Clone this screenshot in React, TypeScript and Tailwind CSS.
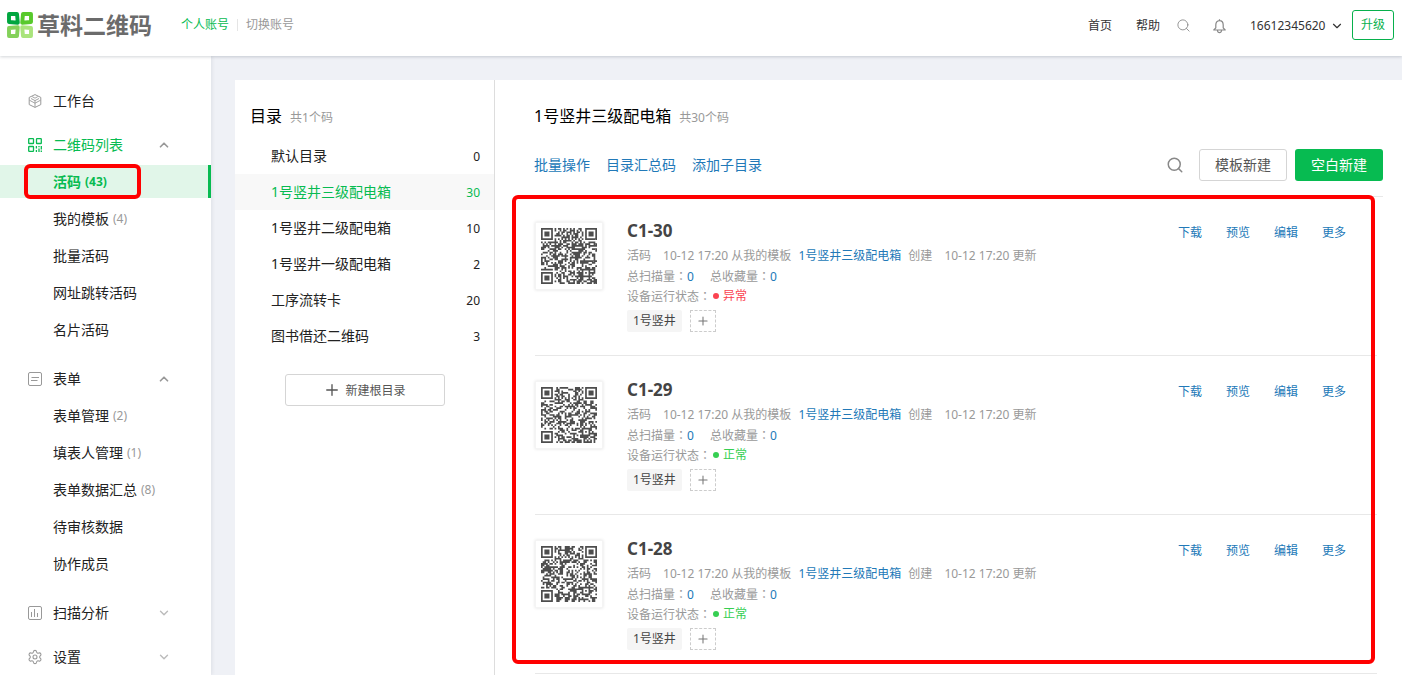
import { Fragment, useState } from "react";
import type { ReactNode } from "react";
import { ChevronDown, ChevronUp, Plus, Search, Settings } from "lucide-react";
import clsx from "clsx";

interface SubItem {
  label: string;
  count?: number;
}

interface NavGroup {
  key: string;
  label: string;
  icon: ReactNode;
  open?: boolean;
  items?: SubItem[];
}

interface CodeItem {
  name: string;
  seed: number;
  ok: boolean;
}

function Logo() {
  return (
    <svg width="26" height="26" viewBox="0 0 26 26" fill="none" strokeWidth="3.9" strokeLinejoin="round">
      <path d="M2 2h8l.8 8.800-8.800-.8z" stroke="#00a63f" />
      <path d="M24 2h-8l-.8 8.800 8.800-.8z" stroke="#58c92c" />
      <path d="M2 24h8l.8-8.800-8.800.8z" stroke="#84d15a" />
      <path d="M24 24h-8l-.8-8.800 8.800.8z" stroke="#aae47c" />
    </svg>
  );
}

function CubeIcon() {
  return (
    <svg width="14" height="14" viewBox="0 0 14 14" fill="none" stroke="currentColor" strokeLinejoin="round">
      <path d="M7 .6 12.8 3.4v7.2L7 13.4 1.2 10.6V3.4z" />
      <path d="M3 4.500 7 6.600l4-2.100M4.200 2.600 7 4.200l2.800-1.600M7 6.600v6.600M1.400 6.200 7 9.200l5.600-3" strokeWidth=".9" />
    </svg>
  );
}

function CodeIcon() {
  return (
    <svg width="14" height="14" viewBox="0 0 14 14" fill="none" stroke="currentColor" strokeWidth="1.3">
      <rect x=".7" y=".7" width="4.8" height="4.8" rx=".6" />
      <rect x="8.5" y=".7" width="4.8" height="4.8" rx=".6" />
      <rect x=".7" y="8.5" width="4.8" height="4.8" rx=".6" />
      <path d="M8.4 8v2.4M8.4 12v2M11 8v1.2M11 10.6V14M13.3 8v3.4M13.3 12.6V14" />
    </svg>
  );
}

function FormIcon() {
  return (
    <svg width="14" height="14" viewBox="0 0 14 14" fill="none" stroke="currentColor">
      <rect x=".5" y=".5" width="13" height="13" rx="1.5" />
      <path d="M3.5 5.5H11M3 8.5h6.5" />
    </svg>
  );
}

function ChartIcon() {
  return (
    <svg width="14" height="14" viewBox="0 0 14 14" fill="none" stroke="currentColor">
      <rect x=".5" y=".5" width="13" height="13" rx="1.5" />
      <path d="M3.500 6v5M6.500 3v8M9.500 7v4" />
    </svg>
  );
}

function BellIcon() {
  return (
    <svg width="13" height="15" viewBox="0 0 13 15" fill="none" stroke="#888" strokeWidth="1.2" strokeLinejoin="round">
      <path d="M6.5 1.6C4 1.6 2.8 3.6 2.8 6v2.8L.8 11h11.4l-2-2.2V6c0-2.4-1.200-4.400-3.700-4.400zM6.500.3v1.300M4.400 11.200c.2 1.700 1 2.500 2.100 2.500s1.900-.8 2.100-2.500" />
    </svg>
  );
}

const SIZE = 33;

// finder, alignment and timing cells are fixed, the rest comes from the seed
function buildCode(seed: number) {
  let state = seed;
  let d = "";
  const corners = [[3, 3], [SIZE - 4, 3], [3, SIZE - 4]];
  for (let y = 0; y < SIZE; y++) {
    for (let x = 0; x < SIZE; x++) {
      state = (state * 1103515245 + 12345) % 2147483648;
      let on = state / 2147483648 < 0.53;
      if (x === 6) on = y % 2 === 0;
      if (y === 6) on = x % 2 === 0;
      const align = Math.max(Math.abs(x - 26), Math.abs(y - 26));
      if (align <= 2) on = align !== 1;
      for (const [cx, cy] of corners) {
        const dist = Math.max(Math.abs(x - cx), Math.abs(y - cy));
        if (dist <= 4) on = dist !== 4 && dist !== 2;
      }
      if (on) d += `M${x} ${y}h1v1h-1z`;
    }
  }
  return d;
}

function QrCode({ seed }: { seed: number }) {
  return (
    <svg className="h-14 w-14" viewBox="0 0 33 33" fill="#4d4d4d">
      <path d={buildCode(seed)} />
    </svg>
  );
}

function Colon() {
  return <span className="font-['Noto_Sans_CJK_TC',sans-serif]">：</span>;
}

const navGroups: NavGroup[] = [
  { key: "desk", label: "工作台", icon: <CubeIcon /> },
  {
    key: "codes",
    label: "二维码列表",
    icon: <CodeIcon />,
    open: true,
    items: [
      { label: "活码", count: 43 },
      { label: "我的模板", count: 4 },
      { label: "批量活码" },
      { label: "网址跳转活码" },
      { label: "名片活码" },
    ],
  },
  {
    key: "forms",
    label: "表单",
    icon: <FormIcon />,
    open: true,
    items: [
      { label: "表单管理", count: 2 },
      { label: "填表人管理", count: 1 },
      { label: "表单数据汇总", count: 8 },
      { label: "待审核数据" },
      { label: "协作成员" },
    ],
  },
  { key: "scan", label: "扫描分析", icon: <ChartIcon />, open: false },
  { key: "settings", label: "设置", icon: <Settings size={16} strokeWidth={1.6} className="-mx-px" />, open: false },
];

const folders = [
  { label: "默认目录", count: 0 },
  { label: "1号竖井三级配电箱", count: 30 },
  { label: "1号竖井二级配电箱", count: 10 },
  { label: "1号竖井一级配电箱", count: 2 },
  { label: "工序流转卡", count: 20 },
  { label: "图书借还二维码", count: 3 },
];

const codes: CodeItem[] = [
  { name: "C1-30", seed: 3011, ok: false },
  { name: "C1-29", seed: 2917, ok: true },
  { name: "C1-28", seed: 2823, ok: true },
];

function Header() {
  return (
    <header className="relative z-10 flex h-14 shrink-0 items-center bg-white pr-2 pb-1.5 pl-[7px] text-xs shadow-[0_1px_3px_rgba(0,21,41,0.18)]">
      <a href="#" className="flex items-center gap-1">
        <Logo />
        <span className="text-[23px] leading-6 font-bold text-[#6b6b6b]">草料二维码</span>
      </a>
      <div className="ml-[29px] flex items-center">
        <a href="#" className="text-[#07bb51]">个人账号</a>
        <span className="mx-2 h-3 w-px bg-[#e5e5e5]" />
        <a href="#" className="text-[#999]">切换账号</a>
      </div>
      <nav className="ml-auto flex items-center text-[#333]">
        <a href="#" className="mr-6 pt-0.5">首页</a>
        <a href="#" className="mr-4 pt-0.5">帮助</a>
        <button aria-label="搜索" className="mr-[22px]">
          <Search size={15} strokeWidth={1.4} className="text-[#888]" />
        </button>
        <button aria-label="通知" className="mr-6 pt-0.5">
          <BellIcon />
        </button>
        <button className="mr-2 flex items-center gap-0.5 pt-0.5">
          <span className="min-w-[78px] text-left">16612345620</span>
          <ChevronDown size={14} strokeWidth={2} />
        </button>
        <button className="h-[30px] rounded-[3px] border border-[#07b04c] px-2 text-[#07b04c]">升级</button>
      </nav>
    </header>
  );
}

function Sidebar({ active, onSelect }: { active: string; onSelect: (label: string) => void }) {
  return (
    <aside className="z-[5] flex w-[211px] shrink-0 flex-col overflow-hidden bg-white pt-[25px] text-sm text-[#222] shadow-[1px_0_4px_rgba(0,21,41,0.08)]">
      {navGroups.map((group) => {
        const current = group.items?.some((item) => item.label === active);
        return (
          <Fragment key={group.key}>
            <button
              className={clsx(
                "flex h-10 shrink-0 items-center gap-[11px] pr-10 pl-7 text-left",
                !group.items && "mb-1",
                current && "text-[#07bb51]"
              )}
            >
              <span className={current ? "text-[#07bb51]" : "text-[#999]"}>{group.icon}</span>
              <span className="flex-1">{group.label}</span>
              {group.open === true && <ChevronUp size={14} strokeWidth={3} className="text-[#999]" />}
              {group.open === false && <ChevronDown size={14} strokeWidth={2.4} className="text-[#bbb]" />}
            </button>
            {group.items && (
              <ul className="mb-[13px] flex flex-col gap-1">
                {group.items.map((item) => {
                  const selected = item.label === active;
                  return (
                    <li key={item.label} className="relative">
                      <button
                        onClick={() => onSelect(item.label)}
                        className={clsx(
                          "flex h-[33px] w-full items-center gap-1 pl-[53px]",
                          selected && "border-r-3 border-[#07bb51] bg-[#e1f6e9] font-bold text-[#07bb51]"
                        )}
                      >
                        {item.label}
                        {item.count !== undefined && (
                          <span className={clsx("text-xs", !selected && "text-[#999]")}>({item.count})</span>
                        )}
                      </button>
                      {selected && (
                        <span className="pointer-events-none absolute -inset-y-px left-6 w-[117px] rounded-md border-4 border-[#f00]" />
                      )}
                    </li>
                  );
                })}
              </ul>
            )}
          </Fragment>
        );
      })}
    </aside>
  );
}

function FolderPanel({ active, onSelect }: { active: string; onSelect: (label: string) => void }) {
  return (
    <section className="w-[260px] shrink-0 border-r border-[#ddd] pt-6">
      <h2 className="flex h-6 items-center gap-2 pl-[15px] text-base text-black">
        目录
        <small className="pt-1 text-xs text-[#999]">共1个码</small>
      </h2>
      <ul className="mt-2.5 mb-5">
        {folders.map((folder) => (
          <li key={folder.label}>
            <button
              onClick={() => onSelect(folder.label)}
              className={clsx(
                "flex h-9 w-full items-center justify-between pr-3.5 pl-9 text-sm",
                folder.label === active ? "bg-[#f8f8f8] text-[#07bb51]" : "text-[#222]"
              )}
            >
              {folder.label}
              <span className="pt-0.5 text-xs">{folder.count}</span>
            </button>
          </li>
        ))}
      </ul>
      <button className="mx-auto flex h-8 w-40 items-center justify-center gap-1 rounded-[3px] border border-[#d5d5d5] text-xs text-[#555]">
        <Plus size={18} strokeWidth={1.8} />
        <span className="pt-0.5">新建根目录</span>
      </button>
    </section>
  );
}

function CodeRow({ code }: { code: CodeItem }) {
  return (
    <li className="mr-1.5 ml-px flex border-b border-[#e8e8e8] pt-6 pb-[23px] text-xs text-[#999]">
      <div className="mt-px flex h-[68px] w-[68px] shrink-0 items-center justify-center border border-[#f4f4f4] bg-white shadow-[0_0_3px_rgba(0,0,0,0.12)]">
        <QrCode seed={code.seed} />
      </div>
      <div className="ml-6 flex-1 leading-5">
        <h3 className="mb-[5px] text-[17px] leading-5 font-bold text-[#444]">{code.name}</h3>
        <p className="flex h-5 gap-3">
          <span>活码</span>
          <span>
            10-12 17:20 从我的模板 <a href="#" className="mx-1 text-[#2279b8]">1号竖井三级配电箱</a> 创建
          </span>
          <span>10-12 17:20 更新</span>
        </p>
        <p className="flex h-5 items-center gap-4">
          <span>总扫描量<Colon /><a href="#" className="text-[#2279b8]">0</a></span>
          <span>总收藏量<Colon /><a href="#" className="text-[#2279b8]">0</a></span>
        </p>
        <p className="flex h-5 items-center">
          <span>设备运行状态<Colon /></span>
          <span className={clsx("ml-0.5 flex items-center gap-1", code.ok ? "text-[#36cf52]" : "text-[#fb4350]")}>
            <span className="h-1.5 w-1.5 rounded-full bg-current" />
            {code.ok ? "正常" : "异常"}
          </span>
        </p>
        <div className="mt-1 flex gap-2">
          <span className="rounded-xs bg-[#f5f5f5] px-1.5 leading-[22px] text-[#444]">1号竖井</span>
          <button
            aria-label="添加标签"
            className="flex h-[22px] w-[26px] items-center justify-center border border-dashed border-[#ccc] text-[#777]"
          >
            <Plus size={14} strokeWidth={1.8} />
          </button>
        </div>
      </div>
      <nav className="mr-[31px] flex h-6 items-center gap-6 text-[#2279b8]">
        <a href="#">下载</a>
        <a href="#">预览</a>
        <a href="#">编辑</a>
        <a href="#">更多</a>
      </nav>
    </li>
  );
}

export default function App() {
  const [menu, setMenu] = useState("活码");
  const [folder, setFolder] = useState("1号竖井三级配电箱");

  return (
    <div className="flex h-screen flex-col overflow-hidden bg-[#eff1f6] font-['Noto_Sans','Noto_Sans_CJK_SC',sans-serif]">
      <Header />
      <div className="flex min-h-0 flex-1">
        <Sidebar active={menu} onSelect={setMenu} />
        <main className="mt-6 ml-6 flex min-w-0 flex-1 bg-white">
          <FolderPanel active={folder} onSelect={setFolder} />
          <section className="min-w-0 flex-1 pt-6 pr-[19px] pl-[39px]">
            <h1 className="flex h-6 items-center gap-2 text-base text-black">
              {folder}
              <small className="pt-1 text-xs text-[#999]">共30个码</small>
            </h1>
            <div className="mt-[21px] mb-[15px] flex h-8 items-center text-sm">
              <div className="flex gap-4 text-[#2279b8]">
                <a href="#">批量操作</a>
                <a href="#">目录汇总码</a>
                <a href="#">添加子目录</a>
              </div>
              <button aria-label="搜索" className="mr-[15px] ml-auto">
                <Search size={18} strokeWidth={2} className="text-[#888]" />
              </button>
              <button className="mr-2 h-8 w-[88px] rounded-[3px] border border-[#d5d5d5] text-[#555]">模板新建</button>
              <button className="h-8 w-[88px] rounded-[3px] bg-[#07bb51] text-white">空白新建</button>
            </div>
            <div className="relative border-t border-[#e8e8e8]">
              <ul>
                {codes.map((code) => (
                  <CodeRow key={code.name} code={code} />
                ))}
              </ul>
              <div className="pointer-events-none absolute -top-0.5 right-2 bottom-2.5 -left-[22px] rounded-md border-4 border-[#f00]" />
            </div>
          </section>
        </main>
      </div>
    </div>
  );
}
